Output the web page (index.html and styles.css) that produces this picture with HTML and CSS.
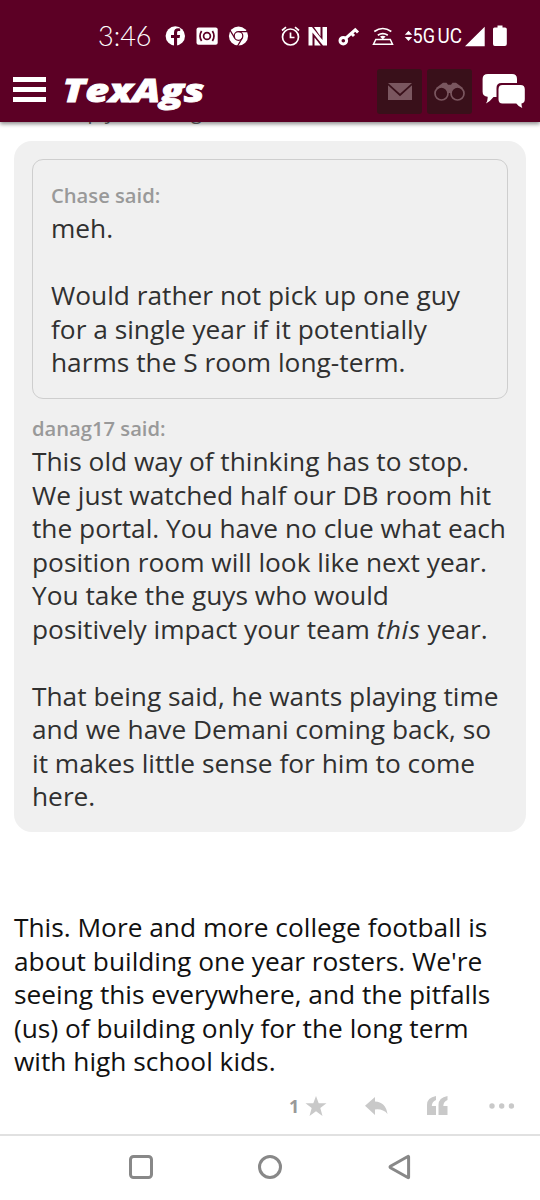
FILE: index.html
```html
<!DOCTYPE html>
<html lang="en">
<head>
<meta charset="utf-8">
<meta name="viewport" content="width=device-width">
<title>TexAgs</title>
<link rel="stylesheet" href="styles.css">
</head>
<body>
<header class="header">
  <div class="status">
    <span class="time">3:46</span>
    <svg class="status-apps" width="86" height="24" viewBox="164 24 86 24">
      <circle cx="175.300" cy="36" r="9.700" fill="#fff"/>
      <path d="M174 46v-8h-3v-3h3v-2.500c0-3 1.700-4.300 4.200-4.300l2 .2v2.600h-1.400c-1.300 0-1.700.7-1.700 1.700v2.300h3l-.5 3h-2.500v8z" fill="#5c0025"/>
      <rect x="196.500" y="27.500" width="21.200" height="17.200" rx="2" fill="#fff"/>
      <g fill="none" stroke="#5c0025" stroke-width="1.700"><circle cx="207" cy="36" r="3.400"/><path d="M201.600 31q-3.200 5 0 10M212.400 31q3.200 5 0 10"/></g>
      <circle cx="238.500" cy="36" r="9.600" fill="#fff"/>
      <g fill="none" stroke="#5c0025" stroke-width="1.200"><circle cx="238.500" cy="36" r="4.300"/><path d="M238.500 31.700h9M234.800 38.100l-5-8.200M242.200 38.100l-4.700 8"/></g>
    </svg>
    <svg class="status-system" width="124" height="24" viewBox="280 24 124 24" fill="none" stroke="#fff" stroke-width="1.700">
      <circle cx="290.500" cy="37" r="8"/><path d="M290.500 32.500v5h4M282 30.500l4-3.300M299 30.500l-4-3.300"/>
      <path d="M308.500 27H312l10.500 13V27h4.500v18.500h-4L312.500 32.500v13h-4z" fill="#fff" stroke="none"/>
      <path d="M314 27h6.500v9.500zM314.500 45.500v-8l6.300 8z" fill="#fff" stroke="none"/>
      <g stroke-width="3"><circle cx="343.300" cy="40.700" r="3.300"/><path d="M345.800 38.200l10.500-9.400M351.200 33l2.800 3M355 29.500l3 3"/></g>
      <path d="M374.300 31.500q8.500-6 17 0M377.800 35.200q5-3.300 10 0"/><path d="M380 36.400q2.800-1.500 5.600 0l-2.800 3z" fill="#fff" stroke="none"/>
      <path d="M375.800 39.500h14.500l2.200 4.700h-19z" stroke-width="1.500"/>
    </svg>
    <svg class="status-signal" width="108" height="24" viewBox="404 24 108 24" fill="#fff">
      <path d="M404.800 34.800l3.700-4 3.700 4zM404.800 37l3.700 4 3.700-4z"/>
      <text class="network" x="412.500" y="43.300" textLength="22.500" lengthAdjust="spacingAndGlyphs">5G</text>
      <text class="network" x="437.500" y="43.300" textLength="24.500" lengthAdjust="spacingAndGlyphs">UC</text>
      <path d="M465 46.300l19.700-19.600v19.600zM497.500 25.500h5v2h2.500q1.800 0 1.800 1.500v15q0 2-2 2h-10q-1.800 0-1.800-2V29q0-1.500 1.500-1.500h3z"/>
    </svg>
  </div>
  <div class="toolbar">
    <div class="menu"><i></i><i></i><i></i></div>
    <svg class="logo" width="144" height="38" viewBox="62 73 144 38">
      <text class="logo-text" x="62.500" y="101.500" textLength="142" lengthAdjust="spacingAndGlyphs">TexAgs</text>
    </svg>
    <div class="tools">
      <div class="tool"><svg width="24" height="17" viewBox="0 0 24 17" fill="#7a565f"><path d="M0 0h24L12 10.800z"/><path d="M0 2.300l12 10.900L24 2.300V17H0z"/></svg></div>
      <div class="tool"><svg width="31" height="19" viewBox="0 0 31 19" fill="#7a565f"><path d="M2 6l7-5.300h3.500l1.500 2h3l1.500-2H22L29 6l-5 3-5 2h-7z"/><g fill="#39101a" stroke="#7a565f" stroke-width="1.700"><circle cx="7.500" cy="11.500" r="6.500"/><circle cx="23.500" cy="11.500" r="6.500"/></g></svg></div>
    </div>
    <svg class="chat" width="44" height="36" viewBox="480 73 44 36"><path d="M487 74h24q5 0 5 5v13q0 5-5 5h-18.500q-3 4-7.500 6.500q2-3.500 1.600-6.700q-5-.5-5-5V79q0-5 5.400-5z" fill="#fff"/><path d="M500.500 83h20v20h-25V88q0-5 5-5z" fill="#5c0025"/><path d="M501.500 85h18q4.300 0 4.300 4.300v10q0 3.700-3.300 4.200q-.1 2.300.8 4.500q-4-1.500-6-4.500h-13.800q-4 0-4-4.200v-10q0-4.300 4-4.300z" fill="#fff"/></svg>
  </div>
</header>
<main class="thread">
  <div class="reply-to">In reply to danag17</div>
  <section class="quote">
    <article class="nested">
      <h2 class="author">Chase said:</h2>
      <p class="copy">meh.<br><br>Would rather not pick up one guy<br>for a single year if it potentially<br>harms the S room long-term.</p>
    </article>
    <h2 class="author">danag17 said:</h2>
    <p class="copy">This old way of thinking has to stop.<br>We just watched half our DB room hit<br>the portal. You have no clue what each<br>position room will look like next year.<br>You take the guys who would<br>positively impact your team <em>this</em> year.<br><br>That being said, he wants playing time<br>and we have Demani coming back, so<br>it makes little sense for him to come<br>here.</p>
  </section>
  <p class="copy post">This. More and more college football is<br>about building one year rosters. We're<br>seeing this everywhere, and the pitfalls<br>(us) of building only for the long term<br>with high school kids.</p>
  <div class="actions">
    <span class="likes">1</span>
    <svg class="star" width="22" height="20" viewBox="0 0 22 20"><path d="M11 0l2.700 7.300H21.500l-6.200 4.600L17.500 20 11 15.200 4.500 20l2.200-8.100L.5 7.300h7.800z"/></svg>
    <svg class="reply" width="23" height="18" viewBox="0 0 23 18"><path d="M0 8.700L10 0v4.500q10.500.3 12.500 12.500Q18 11.600 10 12.500V18z"/></svg>
    <svg class="quotes" width="22" height="20" viewBox="0 0 22 20"><path d="M0 19V9Q0 1.500 9 0v4Q5 5.500 4.800 10H9v9z"/><path d="M11.500 19V9q0-7.500 9-9v4q-4 1.500-4.200 6h4.200v9z"/></svg>
    <svg class="more" width="26" height="6" viewBox="0 0 26 6"><circle cx="3" cy="3" r="2.700"/><circle cx="12.700" cy="3" r="2.700"/><circle cx="22.400" cy="3" r="2.700"/></svg>
  </div>
</main>
<nav class="navigation">
  <svg width="26" height="26" viewBox="0 0 26 26"><rect x="2.500" y="2.500" width="21" height="21" rx="3"/></svg>
  <svg width="26" height="26" viewBox="0 0 26 26"><circle cx="13" cy="13" r="10.500"/></svg>
  <svg width="26" height="26" viewBox="0 0 26 26"><path d="M22.600 2.800v20.400q0 .8-.8.300L4.500 13.700q-1-.7 0-1.400L21.800 2.500q.8-.5.800.3z"/></svg>
</nav>
</body>
</html>
```
FILE: styles.css
```css
* { box-sizing: border-box; }
body {
  margin: 0;
  width: 540px;
  height: 1200px;
  overflow: hidden;
  display: flex;
  flex-direction: column;
  background: #fff;
  font-family: "Open Sans", "Noto Sans", sans-serif;
}
svg { display: block; flex: none; }
.header {
  position: relative;
  z-index: 1;
  height: 122px;
  flex: none;
  padding-top: 24px;
  background: #5c0025;
  box-shadow: 0 2px 4px rgba(0, 0, 0, .45);
}
.status { height: 24px; display: flex; align-items: center; padding-left: 98px; }
.time { width: 66px; color: #fff; font: 300 27px/24px Lato, sans-serif; }
.status-system { margin-left: 30px; }
.network { font: 400 21px Roboto, sans-serif; }
.toolbar { height: 74px; display: flex; align-items: center; padding: 0 10px 0 13px; }
.menu { flex: none; width: 33px; height: 25px; margin-top: 9px; display: flex; flex-direction: column; justify-content: space-between; }
.menu i { height: 5px; background: #fff; }
.logo { margin: 14px 0 0 16px; }
.logo-text { fill: #fff; stroke: #fff; stroke-width: .8; font: italic 800 32px "Open Sans", sans-serif; }
.tools { display: flex; gap: 5px; margin: 13px 0 0 171px; }
.tool { width: 45px; height: 45px; border-radius: 3px; display: grid; place-items: center; background: #39101a; }
.chat { margin: 12px 0 0 9px; }
.thread { height: 1012px; padding: 0 14px; }
.reply-to { height: 19px; margin-left: 31px; color: #666; font-size: 20px; line-height: 0; white-space: pre; }
.reply-to { position: relative; top: -10px; }
.quote { height: 691px; padding: 18px; border-radius: 18px; background: #f0f0f0; color: #303030; }
.nested { height: 240px; padding: 20px 18px; border: 1px solid #cecece; border-radius: 11px; margin-bottom: 14px; }
.author { margin: 0 0 2px; color: #999; font-size: 20.200px; line-height: 30px; font-weight: 600; }
.copy { margin: 0; font-size: 26.290px; line-height: 33.530px; white-space: nowrap; }
.copy em { letter-spacing: .6px; }
.post { margin-top: 79px; color: #111; }
.actions { display: flex; align-items: center; height: 34px; margin-top: 10px; padding-left: 275px; fill: #c9c9c9; }
.likes { width: 16px; color: #999; font-size: 18px; font-weight: 700; }
.reply { margin-left: 38px; }
.quotes { margin-left: 39px; }
.more { margin-left: 40px; }
.navigation { height: 66px; border-top: 2px solid #e1e1e1; display: flex; justify-content: center; align-items: center; gap: 103px; padding-bottom: 2px; fill: none; stroke: #888; stroke-width: 3; }
```
